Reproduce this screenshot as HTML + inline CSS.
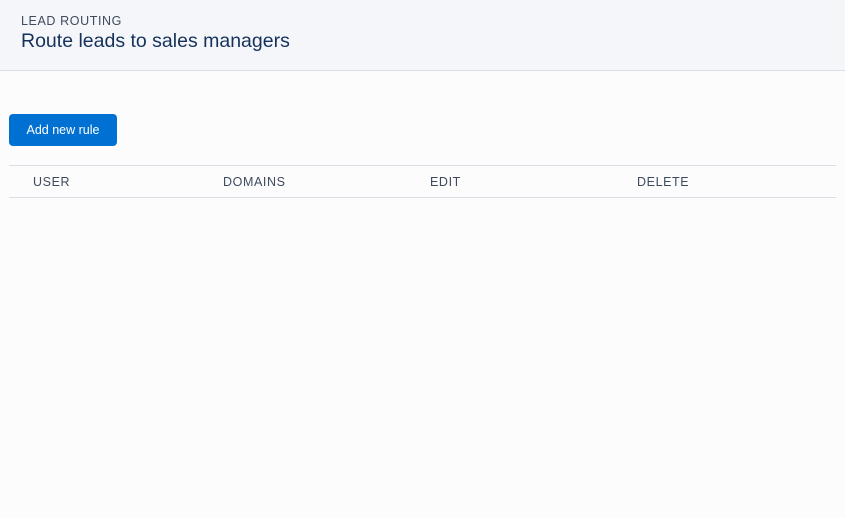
<!DOCTYPE html>
<html><head><style>
body{margin:0;width:845px;height:518px;background:#fcfcfd;font-family:"Liberation Sans",sans-serif;position:relative;overflow:hidden}
.hdr{position:absolute;left:0;top:0;width:845px;height:70px;background:#f4f6f9;border-bottom:1px solid #d8dde6}
.t1{position:absolute;left:21px;top:14px;font-size:12.5px;letter-spacing:0.6px;color:#3e4a5e}
.t2{position:absolute;left:21px;top:30px;font-size:19.5px;color:#16325c}
.btn{position:absolute;left:9px;top:114px;width:108px;height:32px;background:#0070d2;border-radius:4px;color:#fff;font-size:12.5px;line-height:32px;text-align:center}
.tbl{position:absolute;left:9px;top:165px;width:827px;height:31px;border-top:1px solid #d8dde6;border-bottom:1px solid #d8dde6}
.th{position:absolute;top:9px;font-size:12.5px;letter-spacing:0.6px;color:#3e4a5e}
</style></head><body>
<div class="hdr"><div class="t1">LEAD ROUTING</div><div class="t2">Route leads to sales managers</div></div>
<div class="btn">Add new rule</div>
<div class="tbl"><div class="th" style="left:24px">USER</div><div class="th" style="left:214px">DOMAINS</div><div class="th" style="left:421px">EDIT</div><div class="th" style="left:628px">DELETE</div></div>
</body></html>
